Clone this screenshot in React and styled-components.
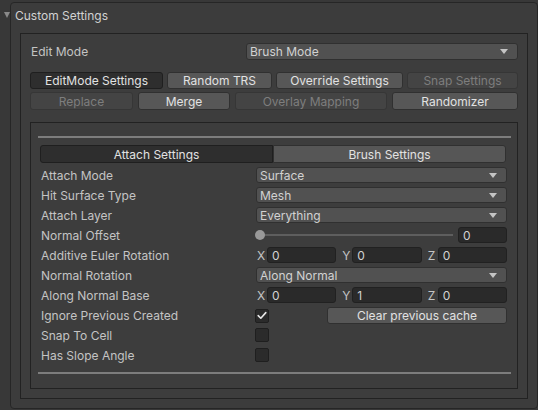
import React from 'react';
import styled, { createGlobalStyle } from 'styled-components';

const Global = createGlobalStyle`
  html, body { margin: 0; padding: 0; background: #383838; }
  body {
    font-family: Inter, "Noto Sans", sans-serif;
    font-size: 12px;
    color: #c4c4c4;
    width: 538px;
    height: 410px;
    overflow: hidden;
  }
  * { box-sizing: border-box; }
`;

const Page = styled.div`
  padding: 2px 0 0 10px;
`;

const OuterBox = styled.div`
  width: 528px;
  height: 407px;
  border: 1px solid #262626;
  border-radius: 4px;
  background: #3c3c3c;
  padding: 0 9px 9px 9px;
`;

const Header = styled.div`
  display: flex;
  align-items: center;
  height: 24px;
  margin-bottom: 6px;
  color: #d2d2d2;
  font-size: 12px;
`;

const Foldout = styled.span`
  width: 0;
  height: 0;
  margin-left: -16px;
  margin-right: 5px;
  border-left: 3.5px solid transparent;
  border-right: 3.5px solid transparent;
  border-top: 6px solid #8a8a8a;
`;

const Box = styled.div`
  border: 1px solid #222222;
  background: #3d3d3d;
  padding: ${p => p.$pad};
  height: ${p => p.$h};
`;

const FieldRow = styled.div`
  display: flex;
  align-items: center;
  height: ${p => p.$h || 16}px;
  margin-bottom: ${p => p.$mb ?? 4}px;
  margin-right: ${p => p.$mr || 0}px;
`;

const Label = styled.div`
  width: ${p => p.$w}px;
  flex: none;
  padding-left: ${p => p.$pl}px;
  color: #c4c4c4;
  white-space: nowrap;
`;

const Dropdown = styled.div`
  flex: 1;
  height: 100%;
  display: flex;
  align-items: center;
  justify-content: space-between;
  padding: 0 9px 0 3px;
  background: #515151;
  border: 1px solid #303030;
  border-radius: 3px;
  color: #d2d2d2;
  &::after {
    content: '';
    border-left: 4px solid transparent;
    border-right: 4px solid transparent;
    border-top: 5px solid #c4c4c4;
  }
`;

const ButtonRow = styled.div`
  display: flex;
  gap: ${p => p.$gap}px;
  height: ${p => p.$h}px;
  margin-bottom: ${p => p.$mb}px;
`;

const Button = styled.div`
  width: ${p => p.$w ? p.$w + 'px' : 'auto'};
  flex: ${p => p.$w ? 'none' : 1};
  height: 100%;
  display: flex;
  align-items: center;
  justify-content: center;
  border-radius: 3px;
  white-space: nowrap;
  border: 1px solid ${p => p.$state === 'on' ? '#1f1f1f' : p.$state === 'off' ? '#363636' : '#303030'};
  background: ${p => p.$state === 'on' ? '#2e2e2e' : p.$state === 'off' ? '#444444' : '#575757'};
  color: ${p => p.$state === 'off' ? '#7e7e7e' : '#e2e2e2'};
`;

const Separator = styled.div`
  height: 2px;
  background: #7d7d7d;
  margin-bottom: ${p => p.$mb}px;
  margin-top: ${p => p.$mt}px;
`;

const Tabs = styled.div`
  display: flex;
  height: 18px;
  margin: 0 5px 4px 2px;
`;

const Tab = styled.div`
  flex: 1;
  display: flex;
  align-items: center;
  justify-content: center;
  border: 1px solid ${p => p.$on ? '#1f1f1f' : '#303030'};
  background: ${p => p.$on ? '#2e2e2e' : '#565656'};
  color: #e2e2e2;
  border-radius: ${p => p.$on ? '3px 0 0 3px' : '0 3px 3px 0'};
`;

const TextField = styled.div`
  flex: ${p => p.$w ? 'none' : 1};
  width: ${p => p.$w ? p.$w + 'px' : 'auto'};
  height: 100%;
  display: flex;
  align-items: center;
  padding-left: 4px;
  background: #2a2a2a;
  border: 1px solid #212121;
  border-radius: 3px;
  color: #d2d2d2;
`;

const Slider = styled.div`
  flex: 1;
  height: 100%;
  position: relative;
  margin-right: 5px;
  display: flex;
  align-items: center;
  &::before {
    content: '';
    flex: 1;
    height: 2px;
    background: #5e5e5e;
  }
`;

const Knob = styled.span`
  position: absolute;
  left: -1px;
  top: 3px;
  width: 10px;
  height: 10px;
  border-radius: 50%;
  background: #999999;
`;

const Vector = styled.div`
  flex: 1;
  display: flex;
  gap: 5px;
  height: 100%;
`;

const Axis = styled.div`
  flex: 1;
  display: flex;
  align-items: center;
  height: 100%;
`;

const AxisLabel = styled.span`
  width: 11px;
  flex: none;
  padding-left: 1px;
  color: #c4c4c4;
`;

const Check = styled.div`
  width: 14px;
  height: 14px;
  flex: none;
  border: 1px solid #1f1f1f;
  border-radius: 2px;
  background: #2b2b2b;
  display: flex;
  align-items: center;
  justify-content: center;
`;

const Spacer = styled.div`
  width: ${p => p.$w}px;
  flex: none;
`;

const Field = ({ label, children, h, mb }) => (
  <FieldRow $h={h} $mb={mb} $mr={4}>
    <Label $w={218} $pl={3}>{label}</Label>
    {children}
  </FieldRow>
);

const Vec3 = ({ values }) => (
  <Vector>
    {['X', 'Y', 'Z'].map((a, i) => (
      <Axis key={a}>
        <AxisLabel>{a}</AxisLabel>
        <TextField>{values[i]}</TextField>
      </Axis>
    ))}
  </Vector>
);

const CheckMark = () => (
  <svg width="10" height="9" viewBox="0 0 10 9">
    <path d="M1.2 4.6 L3.8 7.2 L8.8 1.6" fill="none" stroke="#e8e8e8" strokeWidth="1.6" strokeLinecap="round" strokeLinejoin="round" />
  </svg>
);

export default function App() {
  return (
    <>
      <Global />
      <Page>
        <OuterBox>
          <Header>
            <Foldout />
            Custom Settings
          </Header>
          <Box $pad="9px 9px 9px 9px">
            <FieldRow $h={17} $mb={12}>
              <Label $w={216} $pl={1}>Edit Mode</Label>
              <Dropdown>Brush Mode</Dropdown>
            </FieldRow>
            <ButtonRow $gap={4} $h={17} $mb={3}>
              <Button $w={133} $state="on">EditMode Settings</Button>
              <Button $w={105}>Random TRS</Button>
              <Button $w={127}>Override Settings</Button>
              <Button $state="off">Snap Settings</Button>
            </ButtonRow>
            <ButtonRow $gap={5} $h={18} $mb={12}>
              <Button $w={103} $state="off">Replace</Button>
              <Button $w={92}>Merge</Button>
              <Button $w={152} $state="off">Overlay Mapping</Button>
              <Button>Randomizer</Button>
            </ButtonRow>
            <Box $pad="13px 6px 0 7px" $h="267px">
              <Separator $mb={7} $mt={0} />
              <Tabs>
                <Tab $on>Attach Settings</Tab>
                <Tab>Brush Settings</Tab>
              </Tabs>
              <Field label="Attach Mode"><Dropdown>Surface</Dropdown></Field>
              <Field label="Hit Surface Type"><Dropdown>Mesh</Dropdown></Field>
              <Field label="Attach Layer"><Dropdown>Everything</Dropdown></Field>
              <Field label="Normal Offset">
                <Slider><Knob /></Slider>
                <TextField $w={49}>0</TextField>
              </Field>
              <Field label="Additive Euler Rotation"><Vec3 values={['0', '0', '0']} /></Field>
              <Field label="Normal Rotation"><Dropdown>Along Normal</Dropdown></Field>
              <Field label="Along Normal Base"><Vec3 values={['0', '1', '0']} /></Field>
              <FieldRow $h={17} $mb={3} $mr={4}>
                <Label $w={217} $pl={3}>Ignore Previous Created</Label>
                <Check><CheckMark /></Check>
                <Spacer $w={58} />
                <Button>Clear previous cache</Button>
              </FieldRow>
              <FieldRow $mr={4}>
                <Label $w={217} $pl={3}>Snap To Cell</Label>
                <Check />
              </FieldRow>
              <FieldRow $mb={0} $mr={4}>
                <Label $w={217} $pl={3}>Has Slope Angle</Label>
                <Check />
              </FieldRow>
              <Separator $mt={9} $mb={0} />
            </Box>
          </Box>
        </OuterBox>
      </Page>
    </>
  );
}
